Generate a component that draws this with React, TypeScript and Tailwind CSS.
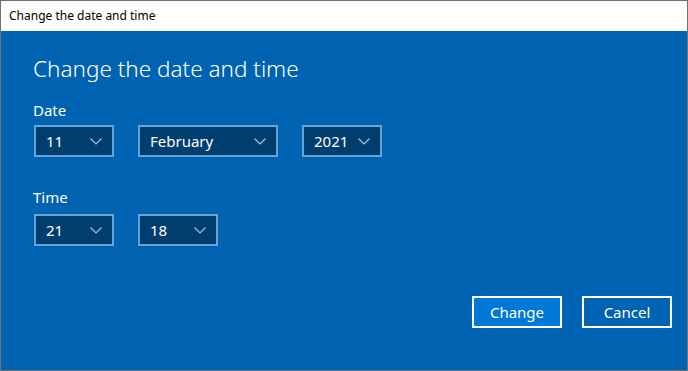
const font = { fontFamily: '"Segoe UI", "Noto Sans", "Open Sans", sans-serif' };

function Chevron() {
  return (
    <svg width="12" height="7" viewBox="0 0 12 7" className="shrink-0">
      <polyline points="0.5,0.5 6,6 11.5,0.5" fill="none" stroke="#a9c2da" strokeWidth="1.2" />
    </svg>
  );
}

function Select({ value, width }: { value: string; width: string }) {
  return (
    <div
      className={`flex h-[32px] ${width} items-center justify-between border-2 border-[#66a3d6] bg-[#003e6f] pl-[10px] pr-[10px] text-[15px] text-white`}
    >
      <span className="leading-none">{value}</span>
      <Chevron />
    </div>
  );
}

export default function App() {
  return (
    <div
      className="flex h-[371px] w-[688px] flex-col border border-[#707070] bg-[#0063b1]"
      style={font}
    >
      <div className="flex h-[30px] items-center bg-white pl-[8px] text-[12px] text-black">
        Change the date and time
      </div>
      <div className="flex flex-1 flex-col pl-[32px] pr-[15px] text-white">
        <h1 className="mt-[22px] text-[22.5px] font-light leading-[32px]">Change the date and time</h1>
        <p className="mt-[15px] text-[15px] leading-[20px]">Date</p>
        <div className="mt-[5px] flex gap-[24px] pl-px">
          <Select value="11" width="w-[80px]" />
          <Select value="February" width="w-[140px]" />
          <Select value="2021" width="w-[80px]" />
        </div>
        <p className="mt-[30px] text-[15px] leading-[20px]">Time</p>
        <div className="mt-[7px] flex gap-[24px] pl-px">
          <Select value="21" width="w-[80px]" />
          <Select value="18" width="w-[80px]" />
        </div>
        <div className="mt-[50px] flex justify-end gap-[20px]">
          <button className="h-[32px] w-[90px] border-2 border-white bg-[#0078d7] text-[15px] text-white">
            Change
          </button>
          <button className="h-[32px] w-[90px] border-2 border-white bg-[#0063b1] text-[15px] text-white">
            Cancel
          </button>
        </div>
      </div>
    </div>
  );
}
